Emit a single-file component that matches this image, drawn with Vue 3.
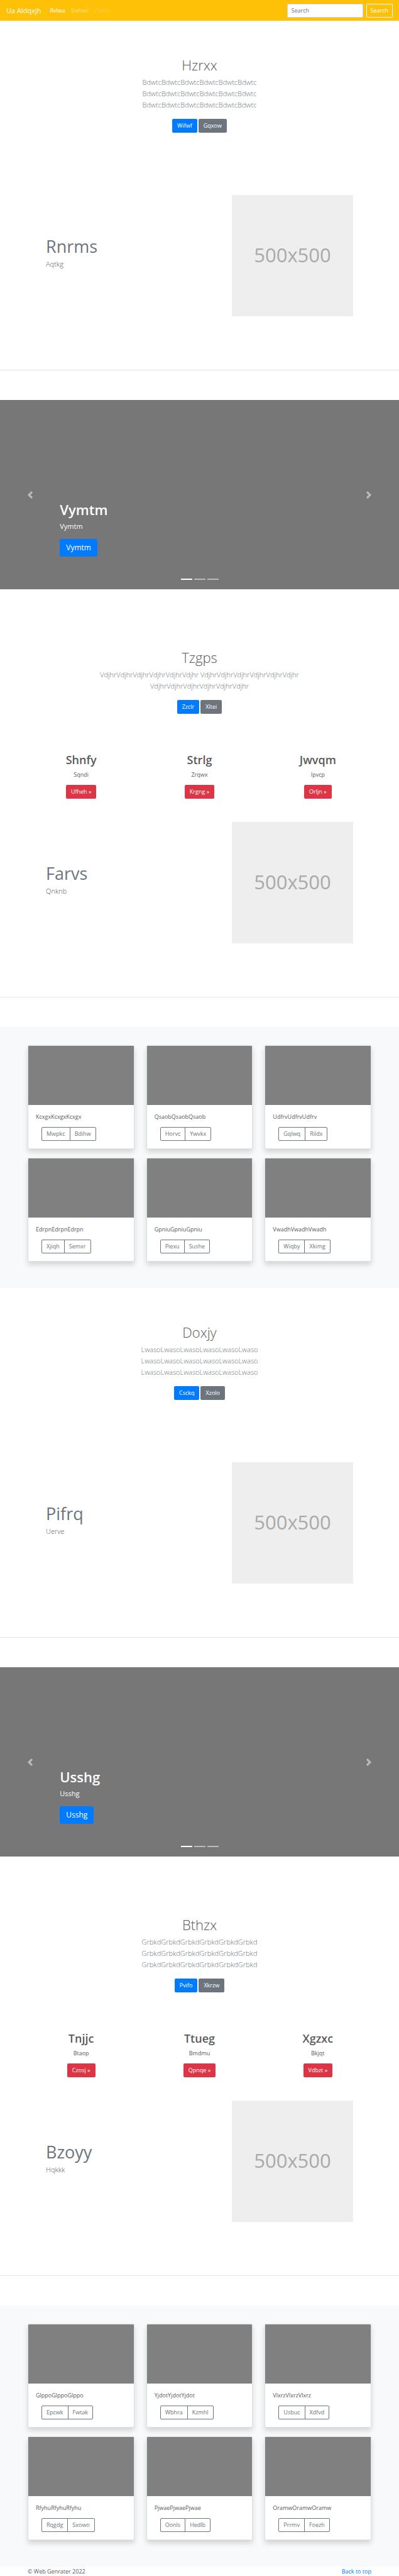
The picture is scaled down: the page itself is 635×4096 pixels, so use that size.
<script setup>
import { ref } from 'vue'

const query = ref('')

const navLinks = [
  { label: 'Rvlwa', state: 'active' },
  { label: 'Swhwc', state: 'normal' },
  { label: 'Zskim', state: 'disabled' },
]

const repeat = (word, times) => word.repeat(times)

const blocks = [
  {
    hero: { title: 'Hzrxx', word: 'Bdwtc', primary: 'Wifwf', secondary: 'Gqxow' },
    columns: [],
    feature: { title: 'Rnrms', text: 'Aqtkg' },
    carousel: 'Vymtm',
    cards: [],
  },
  {
    hero: { title: 'Tzgps', word: 'Vdjhr', primary: 'Zzclr', secondary: 'Xltei' },
    columns: [
      { title: 'Shnfy', text: 'Sqndi', action: 'Ufheh' },
      { title: 'Strlg', text: 'Zrqwx', action: 'Krgng' },
      { title: 'Jwvqm', text: 'Ipvcp', action: 'Orljn' },
    ],
    feature: { title: 'Farvs', text: 'Qnknb' },
    carousel: '',
    cards: [
      { word: 'Kcxgx', left: 'Mwpkc', right: 'Bdihw' },
      { word: 'Qsaob', left: 'Horvc', right: 'Ywvkx' },
      { word: 'Udfrv', left: 'Gqlwq', right: 'Rildx' },
      { word: 'Edrpn', left: 'Xjiqh', right: 'Semxr' },
      { word: 'Gpniu', left: 'Piexu', right: 'Sushe' },
      { word: 'Vwadh', left: 'Wiqby', right: 'Xkimg' },
    ],
  },
  {
    hero: { title: 'Doxjy', word: 'Lwaso', primary: 'Csckq', secondary: 'Xzolo' },
    columns: [],
    feature: { title: 'Pifrq', text: 'Uerve' },
    carousel: 'Usshg',
    cards: [],
  },
  {
    hero: { title: 'Bthzx', word: 'Grbkd', primary: 'Pvifo', secondary: 'Xkrzw' },
    columns: [
      { title: 'Tnjjc', text: 'Btaop', action: 'Czosj' },
      { title: 'Ttueg', text: 'Bmdmu', action: 'Qpnqe' },
      { title: 'Xgzxc', text: 'Bkjqt', action: 'Vdbzt' },
    ],
    feature: { title: 'Bzoyy', text: 'Hqkkk' },
    carousel: '',
    cards: [
      { word: 'Glppo', left: 'Epcwk', right: 'Fwtak' },
      { word: 'Yjdot', left: 'Wbhra', right: 'Kzmhl' },
      { word: 'Vlxrz', left: 'Usbuc', right: 'Xdfvd' },
      { word: 'Rfyhu', left: 'Rqgdg', right: 'Sxowo' },
      { word: 'Pjwae', left: 'Oonls', right: 'Hedlb' },
      { word: 'Oramw', left: 'Prrmv', right: 'Foezh' },
    ],
  },
]
</script>

<template>
  <div id="top" class="page">
    <header class="navbar">
      <a class="brand" href="#top">Ua Aldqxjh</a>
      <nav class="links">
        <a v-for="link in navLinks" :key="link.label" href="#top" :class="['link', link.state]">{{ link.label }}</a>
      </nav>
      <form class="search" @submit.prevent>
        <input v-model="query" type="search" placeholder="Search" aria-label="Search" />
        <button type="submit" class="btn outline-light">Search</button>
      </form>
    </header>

    <main>
      <template v-for="block in blocks" :key="block.hero.title">
        <section class="hero" :class="{ spaced: block.columns.length }">
          <h1>{{ block.hero.title }}</h1>
          <p>{{ repeat(block.hero.word, 6) }} {{ repeat(block.hero.word, 6) }} {{ repeat(block.hero.word, 6) }}</p>
          <div class="actions">
            <a href="#top" class="btn primary">{{ block.hero.primary }}</a>
            <a href="#top" class="btn secondary">{{ block.hero.secondary }}</a>
          </div>
        </section>

        <section v-if="block.columns.length" class="columns">
          <div v-for="col in block.columns" :key="col.title" class="column">
            <h2>{{ col.title }}</h2>
            <p>{{ col.text }}</p>
            <a href="#top" class="btn danger">{{ col.action }} »</a>
          </div>
        </section>

        <section class="feature" :class="{ far: !block.columns.length }">
          <div class="copy">
            <h2>{{ block.feature.title }}</h2>
            <p>{{ block.feature.text }}</p>
          </div>
          <div class="placeholder">500x500</div>
        </section>
        <hr />

        <section v-if="block.carousel" class="carousel">
          <button type="button" class="control" aria-label="Previous">
            <svg viewBox="0 0 8 8" aria-hidden="true"><path d="M5.25 0l-4 4 4 4 1.5-1.5L4.25 4l2.5-2.5L5.25 0z" /></svg>
          </button>
          <div class="slide">
            <h2>{{ block.carousel }}</h2>
            <p>{{ block.carousel }}</p>
            <a href="#top" class="btn primary large">{{ block.carousel }}</a>
          </div>
          <button type="button" class="control" aria-label="Next">
            <svg viewBox="0 0 8 8" aria-hidden="true"><path d="M2.75 0l-1.5 1.5L3.75 4l-2.5 2.5L2.75 8l4-4-4-4z" /></svg>
          </button>
          <div class="indicators">
            <span v-for="n in 3" :key="n" :class="{ current: n === 1 }"></span>
          </div>
        </section>

        <section v-if="block.cards.length" class="gallery">
          <article v-for="card in block.cards" :key="card.word" class="card">
            <div class="thumb"></div>
            <div class="body">
              <p>{{ repeat(card.word, 3) }}</p>
              <div class="group">
                <button type="button">{{ card.left }}</button>
                <button type="button">{{ card.right }}</button>
              </div>
            </div>
          </article>
        </section>
      </template>
    </main>

    <footer class="footer">
      <span>© Web Genrater 2022</span>
      <a href="#top">Back to top</a>
    </footer>
  </div>
</template>

<style>
body {
  margin: 0;
  background: #fff;
}
</style>

<style scoped>
.page {
  font-family: "Segoe UI", "Open Sans", "Noto Sans", sans-serif;
  font-size: 9px;
  line-height: 14px;
  color: #5a5a5a;
}
.page * {
  box-sizing: border-box;
}
h1,
h2,
p {
  margin: 0;
}
a {
  text-decoration: none;
}
button,
input {
  font: inherit;
  margin: 0;
}

.btn {
  display: inline-block;
  height: 22px;
  padding: 0 7px;
  border: 1px solid transparent;
  border-radius: 2px;
  line-height: 20px;
  color: #fff;
}
.primary {
  background: #007bff;
}
.secondary {
  background: #6c757d;
}
.danger {
  background: #dc3545;
}
.large {
  height: 28px;
  padding: 0 9px;
  border-radius: 3px;
  font-size: 12px;
  line-height: 26px;
}

.navbar {
  display: flex;
  align-items: center;
  height: 33px;
  padding: 0 10px;
  background: #ffc107;
}
.brand {
  margin-right: 14px;
  font-size: 11px;
  color: #fff;
}
.links {
  display: flex;
  flex: 1;
  gap: 9px;
}
.link.active {
  color: #fff;
}
.link.normal {
  color: rgba(255, 255, 255, 0.5);
}
.link.disabled {
  color: rgba(255, 255, 255, 0.25);
}
.search {
  display: flex;
  gap: 5px;
}
.search input {
  width: 121px;
  height: 22px;
  padding: 0 6px;
  border: 1px solid #ced4da;
  border-radius: 2px;
  background: #fff;
  outline: none;
}
.search input::placeholder {
  color: #6c757d;
  opacity: 1;
}
.outline-light {
  padding: 0 6px;
  border-color: #f8f9fa;
  background: transparent;
}

.hero {
  padding: 56px 20px 0;
  text-align: center;
}
.hero.spaced {
  margin-top: 38px;
}
.hero h1 {
  margin-bottom: 5px;
  font-size: 22px;
  font-weight: 300;
  line-height: 28px;
}
.hero p {
  max-width: 320px;
  margin: 0 auto 13px;
  font-size: 11px;
  font-weight: 300;
  line-height: 18px;
  color: #6c757d;
}
.actions {
  display: flex;
  justify-content: center;
  gap: 2px;
}

.columns {
  display: grid;
  grid-template-columns: repeat(3, 1fr);
  padding: 62px 35px 0;
  text-align: center;
}
.column h2 {
  margin-bottom: 5px;
  font-size: 18px;
  font-weight: 600;
  line-height: 23px;
}
.column p {
  margin-bottom: 9px;
}
.column .btn {
  vertical-align: top;
}

.feature {
  display: grid;
  grid-template-columns: 1fr 193px;
  margin: 37px 73px 85px;
}
.feature.far {
  margin-top: 99px;
}
.copy {
  padding-top: 64px;
}
.copy h2 {
  margin-bottom: 2px;
  font-size: 27px;
  font-weight: 400;
  line-height: 35px;
  color: #6c757d;
}
.copy p {
  font-size: 11px;
  font-weight: 300;
  line-height: 17px;
}
.placeholder {
  display: flex;
  align-items: center;
  justify-content: center;
  aspect-ratio: 1;
  padding-bottom: 3px;
  background: #eee;
  font-size: 31px;
  color: #aaa;
}
hr {
  margin: 0 0 47px;
  border: 0;
  border-top: 1px solid #e5e5e5;
}

.carousel {
  position: relative;
  display: grid;
  grid-template-columns: 15% 1fr 15%;
  height: 301px;
  background: #777;
  color: #fff;
}
.control {
  display: flex;
  align-items: center;
  justify-content: center;
  padding: 0;
  border: 0;
  background: transparent;
  opacity: 0.5;
}
.control svg {
  width: 12px;
  height: 12px;
  fill: #fff;
}
.slide {
  display: flex;
  flex-direction: column;
  align-items: flex-start;
  justify-content: flex-end;
  padding-bottom: 52px;
}
.slide h2 {
  margin-bottom: 4px;
  font-size: 22px;
  font-weight: 600;
  line-height: 28px;
}
.slide p {
  margin-bottom: 11px;
  font-size: 11px;
  line-height: 18px;
}
.indicators {
  position: absolute;
  right: 0;
  bottom: 15px;
  left: 0;
  display: flex;
  justify-content: center;
  gap: 3px;
}
.indicators span {
  width: 18px;
  height: 2px;
  background: #fff;
  opacity: 0.5;
}
.indicators .current {
  opacity: 1;
}

.gallery {
  display: grid;
  grid-template-columns: repeat(3, 1fr);
  gap: 14px 19px;
  padding: 29px 44px 42px;
  background: #f8f9fa;
}
.card {
  overflow: hidden;
  border: 1px solid #dfdfdf;
  border-radius: 2px;
  background: #fff;
  box-shadow: 0 5px 9px rgba(0, 0, 0, 0.15);
}
.thumb {
  height: 94px;
  background: #808080;
}
.body {
  padding: 12px;
}
.body p {
  margin-bottom: 9px;
}
.group {
  display: flex;
  margin-left: 9px;
}
.group button {
  height: 22px;
  padding: 0 7px;
  border: 1px solid #6c757d;
  background: transparent;
  line-height: 20px;
  color: #6c757d;
}
.group button:first-child {
  border-radius: 2px 0 0 2px;
}
.group button:last-child {
  margin-left: -1px;
  border-radius: 0 2px 2px 0;
}

.footer {
  display: flex;
  justify-content: space-between;
  padding: 0 44px;
  line-height: 15px;
}
.footer a {
  color: #007bff;
}
</style>
